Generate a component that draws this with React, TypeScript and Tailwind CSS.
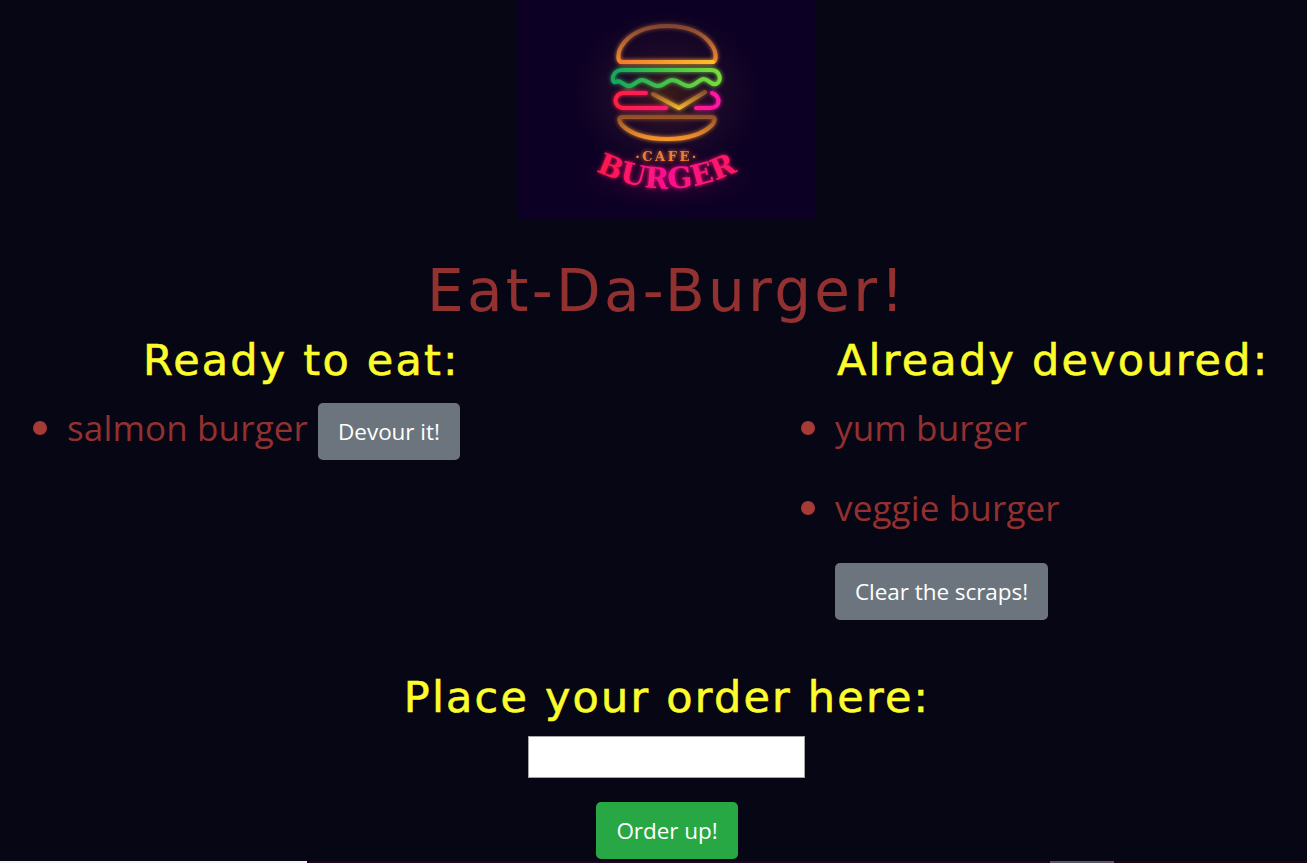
import React from "react";

function Logo() {
  return (
    <svg width="298" height="220" viewBox="0 0 298 220" className="block">
      <defs>
        <radialGradient id="glow" cx="50%" cy="50%" r="50%">
          <stop offset="0%" stopColor="#3a1a18" />
          <stop offset="45%" stopColor="#1e0a28" />
          <stop offset="100%" stopColor="#0c0024" />
        </radialGradient>
        <radialGradient id="glowB" cx="50%" cy="50%" r="50%">
          <stop offset="0%" stopColor="#4a0638" stopOpacity="0.8" />
          <stop offset="100%" stopColor="#0c0024" stopOpacity="0" />
        </radialGradient>
        <linearGradient id="dome" gradientUnits="userSpaceOnUse" x1="149" y1="24" x2="149" y2="62">
          <stop offset="0%" stopColor="#7a4230" />
          <stop offset="100%" stopColor="#f58a30" />
        </linearGradient>
        <linearGradient id="base" gradientUnits="userSpaceOnUse" x1="100" y1="0" x2="198" y2="0">
          <stop offset="0%" stopColor="#f07a30" />
          <stop offset="100%" stopColor="#ffc02c" />
        </linearGradient>
        <linearGradient id="bunBot" gradientUnits="userSpaceOnUse" x1="149" y1="115" x2="149" y2="141">
          <stop offset="0%" stopColor="#8a4a2c" />
          <stop offset="100%" stopColor="#ff9a2a" />
        </linearGradient>
        <linearGradient id="green" gradientUnits="userSpaceOnUse" x1="93" y1="0" x2="204" y2="0">
          <stop offset="0%" stopColor="#12a65c" />
          <stop offset="100%" stopColor="#7ade38" />
        </linearGradient>
        <linearGradient id="meat" gradientUnits="userSpaceOnUse" x1="97" y1="0" x2="203" y2="0">
          <stop offset="0%" stopColor="#ff2040" />
          <stop offset="100%" stopColor="#ff18a8" />
        </linearGradient>
        <linearGradient id="cheese" gradientUnits="userSpaceOnUse" x1="0" y1="92" x2="0" y2="110">
          <stop offset="0%" stopColor="#8a5030" />
          <stop offset="100%" stopColor="#ffc02c" />
        </linearGradient>
        <linearGradient id="word" gradientUnits="userSpaceOnUse" x1="80" y1="0" x2="218" y2="0">
          <stop offset="0%" stopColor="#ff1a48" />
          <stop offset="50%" stopColor="#ff1090" />
          <stop offset="100%" stopColor="#ff1a60" />
        </linearGradient>
        <filter id="neon" x="-20%" y="-20%" width="140%" height="140%">
          <feGaussianBlur stdDeviation="2.2" result="b" />
          <feMerge>
            <feMergeNode in="b" />
            <feMergeNode in="SourceGraphic" />
          </feMerge>
        </filter>
        <path id="arc" d="M 76 170 Q 149 207 222 170" fill="none" />
      </defs>
      <rect width="298" height="220" fill="#0c0024" />
      <ellipse cx="149" cy="95" rx="95" ry="85" fill="url(#glow)" />
      <ellipse cx="149" cy="178" rx="105" ry="38" fill="url(#glowB)" />
      <g filter="url(#neon)" fill="none" strokeWidth="4" strokeLinejoin="round" strokeLinecap="round">
        <path d="M103 62 C 99 61 100 52 103 47 C 112 32 130 26 149 26 C 168 26 186 32 195 47 C 198 52 199 61 195 62" stroke="url(#dome)" />
        <path d="M103 62 H195" stroke="url(#base)" />
        <path d="M104 117 C 100 117 101 122 104 125 C 114 135 132 139 149 139 C 166 139 184 135 194 125 C 197 122 198 117 194 117 Z" stroke="url(#bunBot)" />
        <path d="M104 70 H193 C 203 70 204 82 198 84 C 193 86 190 78 185 79 C 180 80 176 87 170 86 C 164 85 160 80 154 80 C 149 80 145 87 139 86 C 133 85 129 80 124 80 C 119 80 115 87 110 86 C 105 85 102 79 98 82 C 93 84 93 70 104 70 Z" stroke="url(#green)" />
        <path d="M128 93 H106 C 95 93 94 108 107 108 H148" stroke="url(#meat)" />
        <path d="M194 93 C 203 96 203 108 192 108 H178" stroke="url(#meat)" />
        <path d="M135 94 L 161 108 L 187 92" stroke="url(#cheese)" />
      </g>
      <text x="149" y="161" textAnchor="middle" fontFamily="'DejaVu Serif', serif" fontWeight="700" fontSize="13" letterSpacing="2.5" fill="#ee7e34" filter="url(#neon)">·CAFE·</text>
      <text fontFamily="'DejaVu Serif', serif" fontWeight="700" fontSize="29" letterSpacing="0.5" fill="url(#word)" filter="url(#neon)">
        <textPath href="#arc" startOffset="50%" textAnchor="middle">BURGER</textPath>
      </text>
    </svg>
  );
}

function Btn({ children, className }: { children: React.ReactNode; className: string }) {
  return (
    <button className={`block h-[57px] rounded-[5px] px-5 pt-px text-[22.5px] leading-[56px] tracking-[-0.05px] text-white font-['Open_Sans',sans-serif] ${className}`}>
      {children}
    </button>
  );
}

function Item({ children }: { children: React.ReactNode }) {
  return (
    <li className="flex items-center text-[35px] leading-[40px] tracking-[0.15px] text-[#933030] font-['Open_Sans',sans-serif]">
      <span className="relative">
        <span className="absolute -left-[34px] top-[13px] h-[14px] w-[14px] rounded-full bg-[#a63a34]" />
        {children}
      </span>
    </li>
  );
}

const heading =
  "text-[43px] leading-[50px] tracking-[2.2px] text-[#fdfd2c] [-webkit-text-stroke:0.6px_#fdfd2c] font-['DejaVu_Sans',cursive]";

export default function App() {
  return (
    <div className="h-[863px] w-[1307px] overflow-hidden bg-[#070615]">
      <div className="flex h-[861px] w-[1334px] flex-col items-center">
        <Logo />
        <h1 className="mt-[37px] h-[68px] text-center text-[58px] leading-[68px] tracking-[3.3px] text-[#933030] font-['DejaVu_Sans',cursive]">
          Eat-Da-Burger!
        </h1>
        <div className="flex w-full">
          <div className="w-1/2 pl-[67px]">
            <h2 className={`mt-[10px] h-[68px] pl-[76px] ${heading}`}>Ready to eat:</h2>
            <ul>
              <div className="flex items-start gap-[10px]">
                <div className="pt-[5px]"><Item>salmon burger</Item></div>
                <Btn className="bg-[#6c757d]">Devour it!</Btn>
              </div>
            </ul>
          </div>
          <div className="w-1/2 pl-[168px]">
            <h2 className={`mt-[10px] h-[68px] pl-[2px] ${heading}`}>Already devoured:</h2>
            <ul className="flex flex-col gap-[40px] pt-[5px]">
              <Item>yum burger</Item>
              <Item>veggie burger</Item>
            </ul>
            <Btn className="mt-[35px] bg-[#6c757d]">Clear the scraps!</Btn>
          </div>
        </div>
        <h2 className={`mt-[52px] h-[50px] text-center ${heading}`}>Place your order here:</h2>
        <input className="mt-[14px] mr-[2px] h-[42px] w-[277px] border border-[#a5a5a5] bg-white" />
        <Btn className="mt-[24px] bg-[#28a745]">Order up!</Btn>
      </div>
      <div className="flex h-[2px] w-full">
        <div className="w-[307px] bg-[#f4f4f8]" />
        <div className="w-[743px] bg-[#1c0620]" />
        <div className="w-[64px] bg-[#5a5560]" />
        <div className="flex-1 bg-[#1a0510]" />
      </div>
    </div>
  );
}
